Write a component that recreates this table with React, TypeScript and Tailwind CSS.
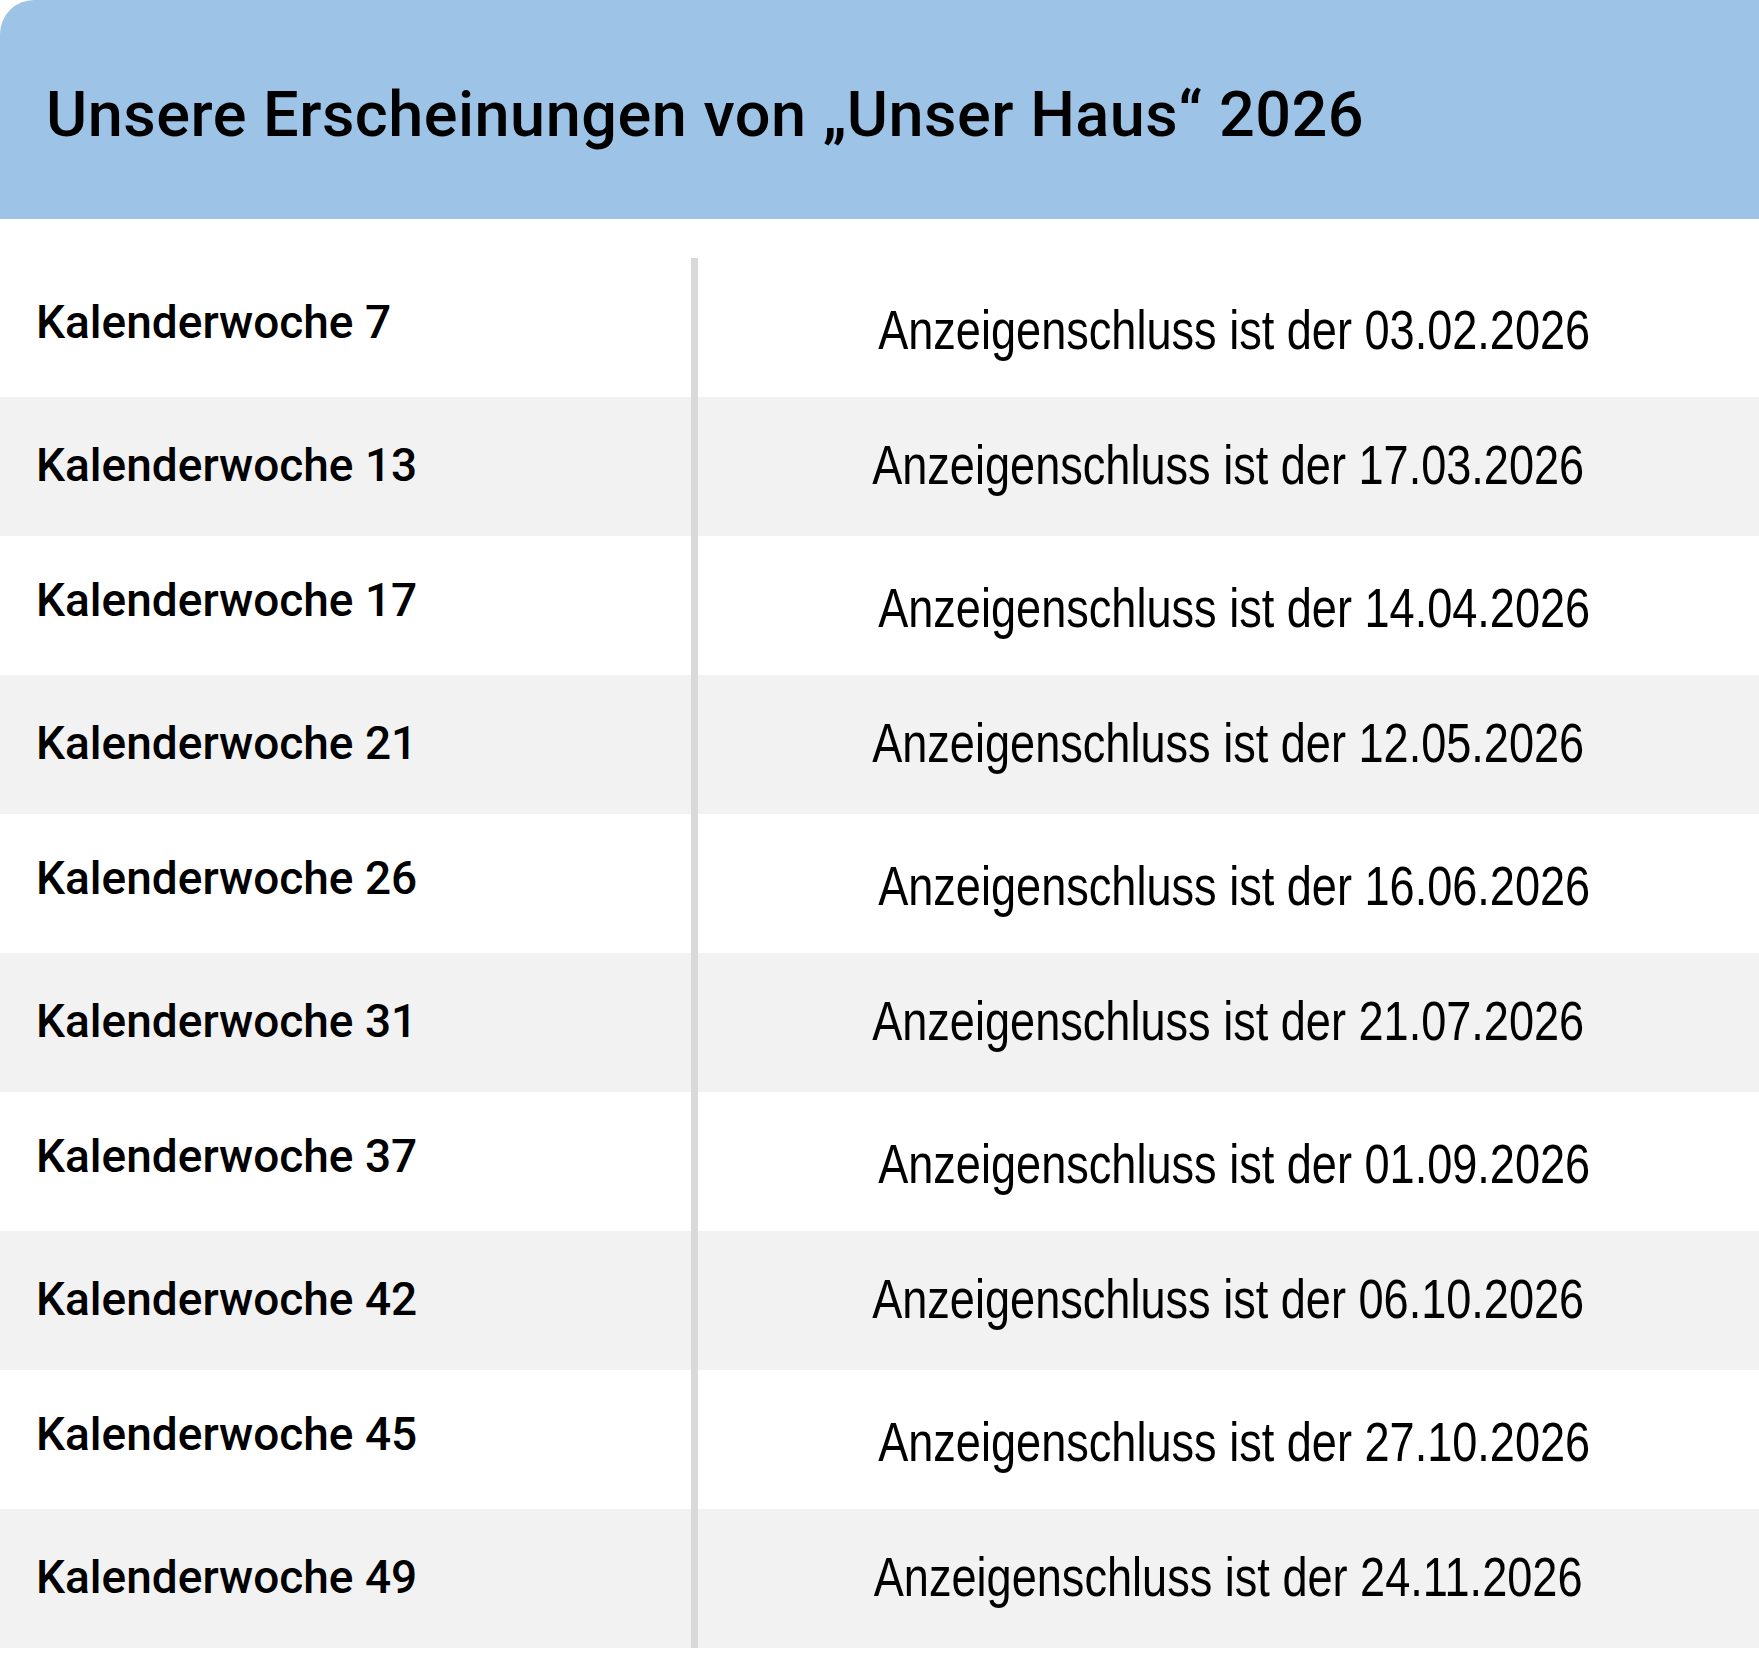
const termine = [
  { woche: 7, schluss: '03.02.2026' },
  { woche: 13, schluss: '17.03.2026' },
  { woche: 17, schluss: '14.04.2026' },
  { woche: 21, schluss: '12.05.2026' },
  { woche: 26, schluss: '16.06.2026' },
  { woche: 31, schluss: '21.07.2026' },
  { woche: 37, schluss: '01.09.2026' },
  { woche: 42, schluss: '06.10.2026' },
  { woche: 45, schluss: '27.10.2026' },
  { woche: 49, schluss: '24.11.2026' },
]

export default function App() {
  return (
    <div className="w-[1759px] min-h-[1654px] bg-white text-black">
      <header className="flex h-[219px] items-center rounded-tl-[34px] bg-[#9dc3e6] pl-[46px] pt-[10px]">
        <h1 className="font-['Roboto',sans-serif] text-[63px] font-medium leading-none tracking-[0.5px]">
          Unsere Erscheinungen von „Unser Haus“ 2026
        </h1>
      </header>

      <div className="h-[39px]" />

      <div className="flex flex-col">
        {termine.map((item, index) => {
          const odd = index % 2 === 0
          return (
            <div
              key={item.woche}
              className={odd ? 'flex h-[139px] bg-white' : 'flex h-[139px] bg-[#f2f2f2]'}
            >
              <div className="flex w-[698px] shrink-0 items-center border-r-[7px] border-[#d9d9d9] pl-[36px]">
                <span
                  className={
                    odd
                      ? "-mt-[12px] font-['Roboto',sans-serif] text-[46px] font-medium leading-none"
                      : "-mt-[4px] font-['Roboto',sans-serif] text-[46px] font-medium leading-none"
                  }
                >
                  Kalenderwoche {item.woche}
                </span>
              </div>
              <div className={odd ? 'flex flex-1 items-center justify-center pl-[12px]' : 'flex flex-1 items-center justify-center'}>
                <span
                  className={
                    odd
                      ? "mt-[6px] inline-block scale-x-[0.82] whitespace-nowrap font-['Liberation_Sans',Arial,sans-serif] text-[55px] leading-none"
                      : "-mt-[2px] inline-block scale-x-[0.82] whitespace-nowrap font-['Liberation_Sans',Arial,sans-serif] text-[55px] leading-none"
                  }
                >
                  Anzeigenschluss ist der {item.schluss}
                </span>
              </div>
            </div>
          )
        })}
      </div>
    </div>
  )
}
